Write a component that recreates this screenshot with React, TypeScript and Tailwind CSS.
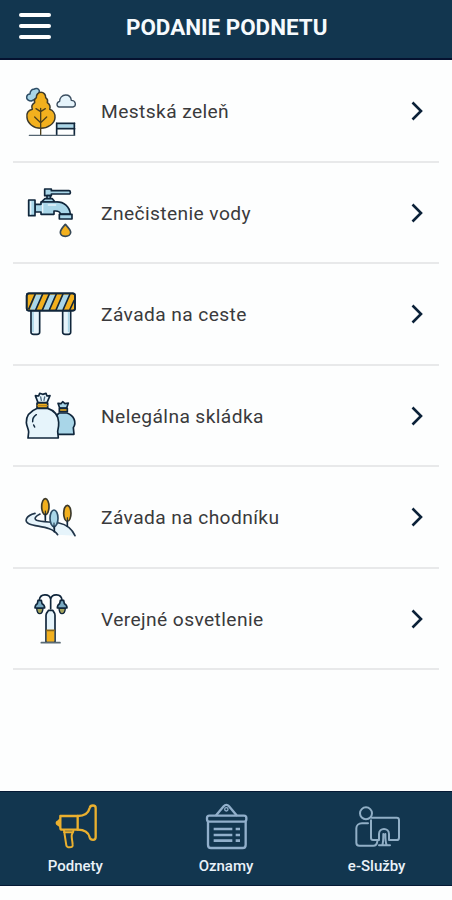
import type { ReactNode } from "react";

const INK = "#10263b";
const SKY = "#a9d6e8";
const PALE = "#e6f4fb";
const GOLD = "#f2b01e";

function TreeIcon() {
  return (
    <svg viewBox="30 16 180 180" className="size-[60px]" fill="none" stroke={INK} strokeWidth="4.5" strokeLinejoin="round" strokeLinecap="round">
      <path d="M64 76c-8 0-15-5-14-12s6-9 10-9c0-9 6-15 12-14 5-5 14-3 16 4l-2 20z" fill={SKY} stroke="#2d4d66" />
      <path d="M93 50c-8 0-15 7-14 16-6 4-7 9-5 15-8 5-10 13-7 20-12 3-18 13-16 25 2 18 20 32 41 32s42-14 43-32c1-12-6-22-16-25 3-8 0-15-7-20 2-6 1-11-5-15 1-9-6-16-14-16z" fill={GOLD} stroke="#3c3a2c" />
      <path d="M92 98v79M92 108l-14-9M92 108l14-9M92 141l-18-17M92 141l18-17" strokeWidth="4" stroke="#4d401c" />
      <path d="M148 94c-9-1-10-14 1-17 0-10 7-19 18-19s16 7 17 16c14 0 16 17 5 20z" fill={PALE} stroke="#3b4e60" strokeWidth="4" />
      <path d="M143 151h48" stroke={SKY} strokeWidth="10" />
      <path d="M140 143h54M140 159h54M140 142v36M193 142v36" strokeWidth="5" />
      <path d="M58 179h136" stroke="#536471" strokeWidth="4" />
    </svg>
  );
}

function TapIcon() {
  return (
    <svg viewBox="30 11 180 180" className="size-[60px]" fill={SKY} stroke={INK} strokeWidth="5" strokeLinejoin="round" strokeLinecap="round">
      <path d="M104 32h20v5h53c5 0 6 10 0 10h-53v5h-20z" />
      <path d="M111 52h10v9h-10zM94 71l11-10h22l8 10z" />
      <path d="M75 78h18v-7h43c27-2 43 15 45 36h-30c-1-6-6-9-14-9h-5v10H93v-7H75z" />
      <path d="M56 65h19v47H56zM148 108h38v14h-38z" />
      <path d="M62 70v37M98 78v24M115 80h22" stroke={PALE} strokeWidth="4" />
      <path d="M166 138c-8 9-15 16-15 24 0 9 7 12 15 12s16-4 16-12c0-8-8-15-16-24z" fill={GOLD} stroke="#374957" />
    </svg>
  );
}

function BarrierIcon() {
  return (
    <svg viewBox="30 10 180 180" className="size-[60px]" fill={PALE} stroke={INK} strokeWidth="5" strokeLinejoin="round">
      <path d="M63 89h26v66c0 6-4 6-8 6H71c-4 0-8 0-8-6zM158 89h24v66c0 6-4 6-7 6h-9c-4 0-8 0-8-6z" />
      <path d="M69 94v60M176 94v60" stroke={SKY} strokeWidth="5" />
      <rect x="50" y="38" width="145" height="52" rx="7" fill={GOLD} />
      <g stroke="none" fill={SKY}>
        <path d="M78 42h18L76 87H60zM119 42h19l-20 45h-19zM160 42h19l-20 45h-19z" />
      </g>
      <path d="M76 40L56 86M98 40L77 88M118 40L97 88M139 40l-21 48M159 40l-21 48M180 40l-21 48M193 58l-14 30" />
      <rect x="50" y="38" width="145" height="52" rx="7" fill="none" />
    </svg>
  );
}

function BagsIcon() {
  return (
    <svg viewBox="30 14 180 180" className="size-[60px]" fill={SKY} stroke={INK} strokeWidth="5" strokeLinejoin="round" strokeLinecap="round">
      <path d="M149 83l-5-14 9 1 5-6 7 6 10-2-5 15z" />
      <path d="M148 98c-9 5-12 12-12 25v39h56l-2-20c10-16 3-36-19-44z" />
      <path d="M148 84h24v10h-24z" fill={GOLD} />
      <path d="M84 67L76 46l10 1 3-8 9 3 10-3 3 8 9-1-9 21z" fill={PALE} />
      <path d="M92 50l2 10M104 50l-2 10" strokeWidth="4" stroke="#4c6a80" />
      <path d="M82 84c-20 8-34 23-33 43 1 12 7 19 7 28l-2 18h91l-2-20c2-8 4-16 3-27-1-22-14-36-33-42z" fill={PALE} />
      <path d="M81 68h32v15H81z" fill={GOLD} />
      <path d="M81 76h32" stroke="#a97b1f" strokeWidth="3" />
      <path d="M79 103c-9 6-12 13-11 21M71 134l3 6" strokeWidth="4.5" />
    </svg>
  );
}

function PathIcon() {
  return (
    <svg viewBox="30 4 180 180" className="size-[60px]" fill="none" stroke={INK} strokeWidth="5" strokeLinejoin="round" strokeLinecap="round">
      <path d="M75 83C48 89 40 108 58 115c22 9 68 7 85 32l52 3c-8-18-23-34-48-38-21-5-52-1-67-8-9-5-4-12 10-19z" fill={PALE} stroke="none" />
      <path d="M75 83C48 89 40 108 58 115c22 9 68 7 85 32" stroke="#22364a" />
      <path d="M90 85c-14 7-19 14-10 19 15 7 46 3 67 8M147 112c24 5 40 20 48 38" stroke="#22364a" />
      <path d="M106 86v18M133 124v14M172 108v14" />
      <ellipse cx="106" cy="63" rx="11" ry="24" fill={GOLD} stroke="#3c3a2c" />
      <ellipse cx="132" cy="98" rx="12" ry="25" fill={SKY} stroke="#2d4d66" />
      <ellipse cx="172" cy="83" rx="11" ry="24" fill={GOLD} stroke="#3c3a2c" />
      <path d="M106 76v18M172 96v16M132 112v16" strokeWidth="3" />
    </svg>
  );
}

function LampIcon() {
  return (
    <svg viewBox="30 17 180 180" className="size-[60px]" fill="none" stroke={INK} strokeWidth="5" strokeLinejoin="round" strokeLinecap="round">
      <path d="M88 53c2-20 30-20 34-3v29M156 53c-2-20-30-20-34-3" />
      <path d="M108 179V99c0-8 6-12 8-15h12c3 4 7 8 7 15v80z" fill={PALE} />
      <path d="M110 144h23v34h-23z" fill={GOLD} stroke="none" />
      <path d="M110 144h23" stroke="#8c6718" />
      <path d="M80 78c1 12 5 16 9 16s9-4 10-16zM147 78c1 12 5 16 9 16s9-4 10-16z" fill="#a5a45c" strokeWidth="4" />
      <path d="M84 54h10l2 10c5 2 8 6 8 13H75c0-7 3-11 7-13zM151 54h10l2 10c5 2 8 6 8 13h-29c0-7 3-11 7-13z" fill="#79aac2" />
      <path d="M94 181h56" stroke="#596a75" />
    </svg>
  );
}

function MegaphoneIcon() {
  return (
    <svg viewBox="154 54 144 144" className="size-12" fill="none" stroke="#eab02f" strokeWidth="7" strokeLinejoin="round" strokeLinecap="round">
      <path d="M182 93h52v41h-46c-4 0-6-2-6-6z" />
      <path d="M181 104c-4 1-5 4-7 5-5 2-5 8 0 10 2 1 3 4 7 5z" fill="#eab02f" strokeWidth="5" />
      <path d="M234 93c21 0 32-7 36-24 2-10 18-10 18 0v88c0 10-15 10-18 0-4-17-15-23-36-23" />
      <path d="M193 136l7 45c1 5 4 6 10 6s10-2 9-8l-1-9c-1-7-2-12-2-18s5-8 5-14M193 142h27" strokeWidth="6" />
    </svg>
  );
}

function NoticeIcon() {
  return (
    <svg viewBox="156 54 144 144" className="size-12" fill="none" stroke="#91afcb" strokeWidth="7" strokeLinejoin="round" strokeLinecap="round">
      <path d="M199 90l22-26c5-6 11-6 16 0l22 26" />
      <circle cx="229" cy="73" r="5" strokeWidth="4" />
      <rect x="171" y="92" width="118" height="18" rx="7" />
      <path d="M174 112v67c0 6 3 10 9 10h95c6 0 9-4 9-10v-67" />
      <path d="M191 132h56M191 150h56M191 167h56M257 132h13M257 150h13M257 167h13" strokeLinecap="butt" strokeWidth="8" />
    </svg>
  );
}

function ServicesIcon() {
  return (
    <svg viewBox="158 54 144 144" className="size-12" fill="none" stroke="#91afc6" strokeWidth="6" strokeLinejoin="round" strokeLinecap="round">
      <circle cx="197" cy="85" r="18" />
      <path d="M214 98h75c5 0 7 2 7 7v53c0 5-2 7-7 7h-23M236 165h-18c-4 0-6-2-6-6v-53" />
      <path d="M203 115h-18c-10 0-17 6-17 15v43c0 6 3 9 9 9h42c7 0 11-5 12-13" />
      <path d="M236 163v-16c0-20 30-20 30 0v16" />
      <path d="M236 181h33M246 180c3-8 3-15 3-33M259 180c-4-8-4-15-4-33" />
    </svg>
  );
}

const categories: { label: string; icon: ReactNode }[] = [
  { label: "Mestská zeleň", icon: <TreeIcon /> },
  { label: "Znečistenie vody", icon: <TapIcon /> },
  { label: "Závada na ceste", icon: <BarrierIcon /> },
  { label: "Nelegálna skládka", icon: <BagsIcon /> },
  { label: "Závada na chodníku", icon: <PathIcon /> },
  { label: "Verejné osvetlenie", icon: <LampIcon /> },
];

const tabs: { label: string; icon: ReactNode }[] = [
  { label: "Podnety", icon: <MegaphoneIcon /> },
  { label: "Oznamy", icon: <NoticeIcon /> },
  { label: "e-Služby", icon: <ServicesIcon /> },
];

export default function App() {
  return (
    <div className="flex h-[900px] w-[452px] flex-col bg-[#fdfefe] font-['Roboto',sans-serif]">
      <header className="grid h-[60px] shrink-0 grid-cols-[126px_1fr_126px] items-center border-b-2 border-[#051230] bg-[#12364f] pb-[6px]">
        <button aria-label="Menu" className="ml-[19px] flex w-8 flex-col gap-[6.5px]">
          <span className="h-[4.5px] rounded-full bg-white" />
          <span className="h-[4.5px] rounded-full bg-white" />
          <span className="h-[4.5px] rounded-full bg-white" />
        </button>
        <h1 className="whitespace-nowrap pt-0.5 text-center text-[22.4px] font-bold leading-7 text-[#f6fafd]">
          PODANIE PODNETU
        </h1>
      </header>

      <main className="flex-1 px-[13px] pt-px">
        <ul>
          {categories.map((c) => (
            <li
              key={c.label}
              className="flex h-[101.5px] items-center border-b-2 border-[#e8e9ea] pl-[7px] pr-4"
            >
              {c.icon}
              <span className="ml-[21px] flex-1 pt-[3px] text-[19.2px] leading-6 tracking-[0.4px] text-[#3a3a3c]">
                {c.label}
              </span>
              <svg viewBox="0 0 12 20" className="mt-px h-5 w-3" fill="none" stroke="#0b2138" strokeWidth="2.6">
                <path d="M1.5 1.5L10 10L1.5 18.5" />
              </svg>
            </li>
          ))}
        </ul>
      </main>

      <nav className="grid h-[95px] shrink-0 grid-cols-3 border-y border-[#051a35] bg-[#12364f]">
        {tabs.map((t) => (
          <button key={t.label} className="flex flex-col items-center pt-[11px]">
            {t.icon}
            <span className="mt-[5px] text-[15px] font-medium leading-5 text-[#e9f1f8]">{t.label}</span>
          </button>
        ))}
      </nav>
      <div className="h-[14px] shrink-0" />
    </div>
  );
}
